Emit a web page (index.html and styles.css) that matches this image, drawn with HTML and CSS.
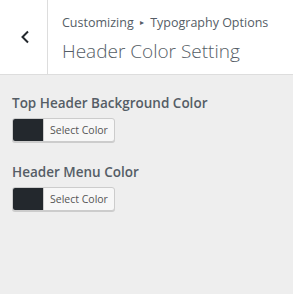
FILE: index.html
```html
<!DOCTYPE html>
<html lang="en">
<head>
  <meta charset="UTF-8">
  <title>Header Color Setting</title>
  <link rel="stylesheet" href="styles.css">
</head>
<body>
  <div class="panel-header">
    <button class="back-btn" aria-label="Back">
      <svg width="12" height="14" viewBox="0 0 12 14"><path d="M9 1.5 L3.5 7 L9 12.5" fill="none" stroke="#23282d" stroke-width="2"/></svg>
    </button>
    <div class="panel-title">
      <div class="crumbs">Customizing <span class="sep">&#9656;</span> Typography Options</div>
      <h2>Header Color Setting</h2>
    </div>
  </div>

  <div class="controls">
    <div class="control">
      <label class="control-label">Top Header Background Color</label>
      <button class="color-btn"><span class="swatch"></span><span class="btn-text">Select Color</span></button>
    </div>
    <div class="control">
      <label class="control-label">Header Menu Color</label>
      <button class="color-btn"><span class="swatch"></span><span class="btn-text">Select Color</span></button>
    </div>
  </div>
</body>
</html>
```

FILE: styles.css
```css
html, body {
  margin: 0;
  height: 100%;
}
body {
  font-family: "Open Sans", "Noto Sans", sans-serif;
  background-color: #eeeeee;
  color: #555d66;
}
.panel-header {
  display: flex;
  height: 74px;
  background-color: #fff;
  border-bottom: 1px solid #dddddd;
}
.back-btn {
  width: 48px;
  border: none;
  border-right: 1px solid #dddddd;
  background: #fff;
  padding: 0 0 0 2px;
  display: flex;
  align-items: center;
  justify-content: center;
}
.panel-title {
  padding: 13px 0 0 14px;
}
.crumbs {
  font-size: 12.5px;
  line-height: 18px;
  color: #555d66;
}
.sep {
  font-size: 8px;
  vertical-align: 2px;
  margin: 0 3px;
}
.panel-title h2 {
  margin: 6px 0 0;
  font-size: 19px;
  font-weight: 300;
  line-height: 26px;
  color: #555d66;
}
.controls {
  padding: 18px 12px;
}
.control {
  margin-bottom: 20px;
}
.control-label {
  display: block;
  font-size: 13.5px;
  font-weight: 600;
  line-height: 20px;
  color: #555d66;
  margin-bottom: 5px;
}
.color-btn {
  display: flex;
  align-items: stretch;
  height: 24px;
  padding: 0;
  border: 1px solid #cccccc;
  border-radius: 3px;
  background-color: #f7f7f7;
  box-shadow: 0 1px 0 #cccccc;
  font-family: inherit;
  overflow: hidden;
}
.swatch {
  width: 30px;
  background-color: #23282d;
  border-right: 1px solid #cccccc;
}
.btn-text {
  display: flex;
  align-items: center;
  padding: 0 6px 0 6px;
  font-size: 10.5px;
  color: #555;
}
```
